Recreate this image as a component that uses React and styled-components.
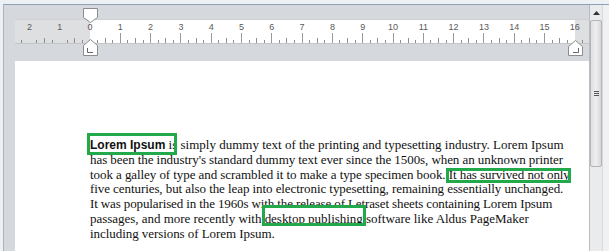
import React from "react";
import styled, { createGlobalStyle } from "styled-components";

const GlobalStyle = createGlobalStyle`
  html, body { margin: 0; padding: 0; }
  body { background: #eef1f4; overflow: hidden; }
`;

const Frame = styled.div`
  width: 609px;
  height: 251px;
  box-sizing: border-box;
  padding: 4px 0 0 3px;
  background: #eef1f4;
  display: flex;
  overflow: hidden;
`;

const Main = styled.div`
  flex: 1;
  display: flex;
  border-top: 1px solid #8aa1b8;
  border-left: 1px solid #a9b3bd;
  min-width: 0;
`;

const Workspace = styled.div`
  flex: 1;
  display: flex;
  flex-direction: column;
  background: #d5d8dc;
  min-width: 0;
`;

const RulerArea = styled.div`
  position: relative;
  height: 56px;
  flex: none;
  padding: 14px 0 0 11px;
  box-sizing: border-box;
`;

const RulerSvg = styled.svg`
  display: block;
`;

const Markers = styled.svg`
  position: absolute;
  left: 0;
  top: 0;
  pointer-events: none;
`;

const Page = styled.div`
  flex: 1;
  margin-left: 11px;
  background: #ffffff;
  padding: 77px 0 0 75px;
  font-family: "Liberation Serif", "Times New Roman", serif;
  font-size: 13px;
  line-height: 14.75px;
  color: #111;
`;

const Line = styled.div`
  white-space: nowrap;
  letter-spacing: ${(p) => p.$ls || 0}px;
`;

const Highlight = styled.span`
  position: relative;
  font-family: ${(p) => (p.$sans ? `"Liberation Sans", Arial, sans-serif` : "inherit")};
  font-weight: ${(p) => (p.$sans ? 700 : 400)};
  font-size: ${(p) => (p.$sans ? "12px" : "inherit")};
  letter-spacing: ${(p) => (p.$sans ? "0px" : "inherit")};
  &::after {
    content: "";
    position: absolute;
    top: ${(p) => p.$t}px;
    right: ${(p) => p.$r}px;
    bottom: ${(p) => p.$b}px;
    left: ${(p) => p.$l}px;
    border: 3px solid #22a94b;
  }
`;

const Scrollbar = styled.div`
  width: 20px;
  flex: none;
  display: flex;
  background: #eaebed;
  border-left: 1px solid #b9bcc1;
  box-sizing: border-box;
`;

const Track = styled.div`
  width: 12px;
  display: flex;
  flex-direction: column;
  align-items: center;
`;

const Arrow = styled.div`
  height: 15px;
  display: flex;
  align-items: center;
  justify-content: center;
  width: 100%;
`;

const Thumb = styled.div`
  width: 12px;
  height: 147px;
  box-sizing: border-box;
  border: 1px solid #b3b5b9;
  border-radius: 2px;
  background: linear-gradient(to right, #dfe0e2, #eeeeef 50%, #d6d7d9);
  display: flex;
  flex-direction: column;
  align-items: center;
  justify-content: center;
  gap: 1px;
`;

const Grip = styled.div`
  width: 5px;
  height: 1px;
  background: #555;
`;

const Edge = styled.div`
  flex: 1;
  border-left: 1px solid #d8d9dc;
  background: #f1f1f3;
`;

const U = 30.3;
const ZERO = 75;
const RW = 574;

function Ruler() {
  const ticks = [];
  for (let q = -12; q <= 66; q++) {
    const x = ZERO + (q * U) / 4;
    if (x < 2 || x > RW - 2) continue;
    const m = ((q % 4) + 4) % 4;
    if (m === 0) continue;
    const h = m === 2 ? 5 : 3;
    ticks.push(
      <line key={q} x1={x} x2={x} y1={24 - h} y2={24} stroke="#8d8d8d" strokeWidth="1" shapeRendering="crispEdges" />
    );
  }
  const nums = [];
  for (let n = -2; n <= 16; n++) {
    const x = ZERO + n * U;
    nums.push(
      <text key={n} x={x} y={11} textAnchor="middle" fontSize="9" fill="#5a5a5a" fontFamily="Liberation Sans, Arial, sans-serif">
        {Math.abs(n)}
      </text>
    );
    if (n > 0 && n < 16) {
      nums.push(
        <line key={"t" + n} x1={x} x2={x} y1={14} y2={24} stroke="#9a9a9a" strokeWidth="1" shapeRendering="crispEdges" />
      );
    }
  }
  return (
    <RulerSvg width={RW} height={25} viewBox={`0 0 ${RW} 25`}>
      <rect x="0" y="0" width={RW} height="25" fill="#dedfe0" />
      <rect x={ZERO} y="0" width={485} height="25" fill="#ffffff" />
      <line x1="0" x2={RW} y1="0.5" y2="0.5" stroke="#cfd0d2" />
      <line x1="0" x2={RW} y1="24.5" y2="24.5" stroke="#c4c5c7" />
      {ticks}
      {nums}
    </RulerSvg>
  );
}

function IndentMarkers() {
  return (
    <Markers width={585} height={56} viewBox="0 0 585 56">
      <path d="M79.5 3.5 H93.5 V12.5 L86.5 17.5 L79.5 12.5 Z" fill="#fff" stroke="#8c8c8c" />
      <path d="M86.5 34.5 L93.5 40.5 V50.5 H79.5 V40.5 Z" fill="#fff" stroke="#8c8c8c" />
      <path d="M83.5 43 V47.5 H89" fill="none" stroke="#666" />
      <path d="M571.5 35.5 L578.5 41.5 V50.5 H564.5 V41.5 Z" fill="#fff" stroke="#8c8c8c" />
      <path d="M574.5 43 V47.5 H569" fill="none" stroke="#666" />
    </Markers>
  );
}

export default function App() {
  return (
    <>
      <GlobalStyle />
      <Frame>
        <Main>
          <Workspace>
            <RulerArea>
              <Ruler />
              <IndentMarkers />
            </RulerArea>
            <Page>
              <Line>
                <Highlight $sans $t={-5} $r={-12} $b={-3} $l={-3}>Lorem Ipsum</Highlight> is simply dummy text of the printing and typesetting industry. Lorem Ipsum
              </Line>
              <Line $ls={-0.07}>has been the industry's standard dummy text ever since the 1500s, when an unknown printer</Line>
              <Line $ls={-0.07}>
                took a galley of type and scrambled it to make a type specimen book.{" "}
                <Highlight $t={1} $r={-1} $b={-1} $l={-3}>It has survived not only</Highlight>
              </Line>
              <Line $ls={-0.072}>five centuries, but also the leap into electronic typesetting, remaining essentially unchanged.</Line>
              <Line $ls={-0.12}>It was popularised in the 1960s with the release of Letraset sheets containing Lorem Ipsum</Line>
              <Line $ls={-0.025}>
                passages, and more recently with <Highlight $t={-6} $r={-3} $b={0} $l={-3}>desktop publishing</Highlight> software like Aldus PageMaker
              </Line>
              <Line $ls={-0.06}>including versions of Lorem Ipsum.</Line>
            </Page>
          </Workspace>
          <Scrollbar>
            <Track>
              <Arrow>
                <svg width="7" height="4" viewBox="0 0 7 4">
                  <path d="M0 4 L3.5 0 L7 4 Z" fill="#333" />
                </svg>
              </Arrow>
              <Thumb>
                <Grip />
                <Grip />
                <Grip />
              </Thumb>
            </Track>
            <Edge />
          </Scrollbar>
        </Main>
      </Frame>
    </>
  );
}
